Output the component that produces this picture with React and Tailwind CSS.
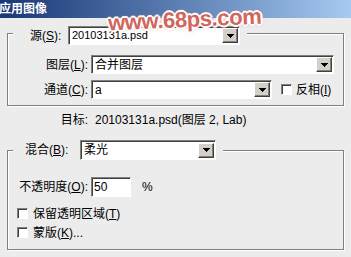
import React from "react";

const FONT = "[font-family:'Liberation_Sans','Noto_Sans_CJK_SC',sans-serif]";

// classic sunken edge used by combos, text fields and check boxes
const SUNKEN =
  "border border-t-[#808080] border-l-[#808080] border-b-white border-r-white shadow-[inset_1px_1px_0_#404040] bg-white";

const DownArrow = () => (
  <svg width="7" height="4" viewBox="0 0 7 4" shapeRendering="crispEdges">
    <path d="M0 0h7v1H0zM1 1h5v1H1zM2 2h3v1H2zM3 3h1v1H3z" fill="#000" />
  </svg>
);

const Combo = ({ width, height = "h-[19px]", value, textSize = "text-[12px]" }) => (
  <div className={`flex items-center ${SUNKEN} ${width} ${height}`}>
    <span className={`pl-[3px] leading-none text-black ${textSize}`}>{value}</span>
    <div className="ml-auto mr-[1px] flex h-[15px] w-[16px] items-center justify-center border border-t-white border-l-white border-b-[#404040] border-r-[#404040] bg-[#d4d0c8] shadow-[inset_-1px_-1px_0_#808080]">
      <DownArrow />
    </div>
  </div>
);

const CheckBox = () => <div className={`h-[11px] w-[11px] shrink-0 ${SUNKEN}`} />;

const GROUP =
  "border border-[#808080] shadow-[1px_1px_0_#fff,inset_1px_1px_0_#fff]";

export default function App() {
  return (
    <div className={`relative h-[257px] w-[351px] overflow-hidden bg-[#ececec] text-[12px] text-black ${FONT}`}>
      {/* title bar */}
      <div className="flex h-[18px] items-center bg-gradient-to-r from-[#1a3676] to-[#a6caf0]">
        <span className="ml-[-1px] text-[12px] font-bold leading-none text-white">应用图像</span>
      </div>

      <div className="px-[7px]">
        {/* source group */}
        <fieldset className={`mt-[3px] pb-[6px] ${GROUP}`}>
          <legend className="ml-[5px] bg-[#ececec] pt-[5px] pl-[17px] pr-[7px]">
            <div className="flex items-center">
              <span className="w-[38px] leading-none">
                源(<u>S</u>):
              </span>
              <Combo width="w-[172px]" value="20103131a.psd" textSize="text-[11px]" />
            </div>
          </legend>

          <div className="mt-[10px] flex h-[19px] items-center">
            <span className="w-[83px] pr-[3px] text-right leading-none">
              图层(<u>L</u>):
            </span>
            <Combo width="w-[243px]" value="合并图层" />
          </div>

          <div className="mt-[6px] flex h-[19px] items-center">
            <span className="w-[83px] pr-[3px] text-right leading-none">
              通道(<u>C</u>):
            </span>
            <Combo width="w-[181px]" value="a" />
            <div className="ml-[9px] flex items-center">
              <CheckBox />
              <span className="ml-[4px] leading-none">
                反相(<u>I</u>)
              </span>
            </div>
          </div>
        </fieldset>

        {/* target line */}
        <div className="mt-[7px] flex h-[14px] items-center leading-none">
          <span className="w-[81px] text-right">目标:</span>
          <span className="ml-[7px]">20103131a.psd(图层 2, Lab)</span>
        </div>

        {/* blending group */}
        <fieldset className={`mt-[13px] pb-[10px] ${GROUP}`}>
          <legend className="ml-[5px] bg-[#ececec] pl-[12px] pr-[7px]">
            <div className="flex items-center">
              <span className="w-[55px] leading-none">
                混合(<u>B</u>):
              </span>
              <Combo width="w-[136px]" height="h-[20px]" value="柔光" />
            </div>
          </legend>

          <div className="mt-[17px] flex h-[20px] items-center">
            <span className="w-[83px] pr-[3px] text-right leading-none">
              不透明度(<u>O</u>):
            </span>
            <div className={`flex h-[20px] w-[40px] items-center ${SUNKEN}`}>
              <span className="pl-[2px] leading-none">50</span>
            </div>
            <span className="ml-[11px] leading-none">%</span>
          </div>

          <div className="mt-[10px] flex h-[13px] items-center pl-[9px]">
            <CheckBox />
            <span className="ml-[5px] leading-none">
              保留透明区域(<u>T</u>)
            </span>
          </div>

          <div className="mt-[6px] flex h-[13px] items-center pl-[9px]">
            <CheckBox />
            <span className="ml-[5px] leading-none">
              蒙版(<u>K</u>)...
            </span>
          </div>
        </fieldset>
      </div>

      {/* site watermark stamped over the dialog */}
      <div className="pointer-events-none absolute left-[108px] top-[9px] rotate-[-2.6deg] text-[22px] font-bold leading-none tracking-[-0.4px] text-[#d0665e] [font-family:'Liberation_Sans',sans-serif] [text-shadow:2px_0_0_#fff,-2px_0_0_#fff,0_2px_0_#fff,0_-2px_0_#fff,1px_1px_0_#fff,-1px_-1px_0_#fff,1px_-1px_0_#fff,-1px_1px_0_#fff,0_0_4px_#d9857e]">
        www.68ps.com
      </div>
    </div>
  );
}
